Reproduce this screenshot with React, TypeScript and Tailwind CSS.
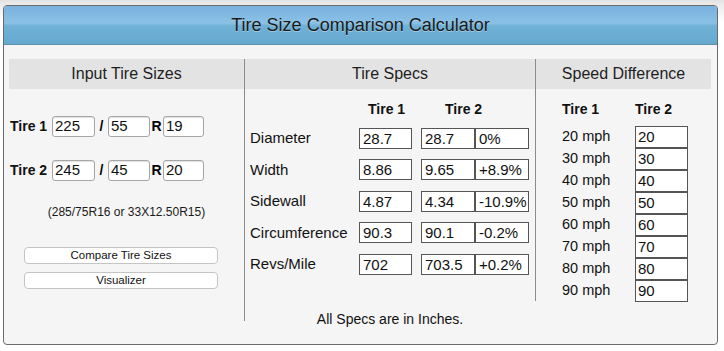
import React from 'react'

const specRows = [
  { label: 'Diameter', t1: '28.7', t2: '28.7', diff: '0%' },
  { label: 'Width', t1: '8.86', t2: '9.65', diff: '+8.9%' },
  { label: 'Sidewall', t1: '4.87', t2: '4.34', diff: '-10.9%' },
  { label: 'Circumference', t1: '90.3', t2: '90.1', diff: '-0.2%' },
  { label: 'Revs/Mile', t1: '702', t2: '703.5', diff: '+0.2%' },
]

const speeds = [20, 30, 40, 50, 60, 70, 80, 90]

function SizeInput({ value, width }: { value: string; width: string }) {
  return (
    <input
      readOnly
      value={value}
      className={`${width} block h-[21px] rounded-[3px] border border-[#a6a6a6] bg-white px-[2px] text-[15px] text-[#111] shadow-[inset_0_1px_1px_rgba(0,0,0,0.12)] focus:outline-none`}
    />
  )
}

function SpecBox({ value, width }: { value: string; width: string }) {
  return (
    <div className={`${width} h-[21px] border border-[#555] bg-white pl-[3px] text-[15px] leading-[19px] text-[#111]`}>
      {value}
    </div>
  )
}

function SectionBar({ title }: { title: string }) {
  return (
    <div className="h-[30px] bg-[#e3e3e3] text-center text-[16px] leading-[30px] text-[#1e1e1e]">
      {title}
    </div>
  )
}

function TireRow({ label, width, ratio, rim }: { label: string; width: string; ratio: string; rim: string }) {
  return (
    <div className="flex h-[21px] items-center pl-[1px]">
      <span className="w-[42px] text-[14px] font-bold text-[#111]">{label}</span>
      <SizeInput value={width} width="w-[43px]" />
      <span className="w-[13px] text-center text-[14px] font-bold">/</span>
      <SizeInput value={ratio} width="w-[42px]" />
      <span className="w-[13px] text-center text-[14px] font-bold">R</span>
      <SizeInput value={rim} width="w-[41px]" />
    </div>
  )
}

export default function App() {
  return (
    <div
      className="min-h-[351px] bg-[linear-gradient(to_bottom,#e2e2e2_0px,#ececec_5px,#ffffff_22px)] pl-[3px] pt-[5px]"
      style={{ fontFamily: '"Liberation Sans", Arial, Helvetica, sans-serif' }}
    >
      <div className="w-[715px] h-[340px] overflow-hidden rounded-[4px] border border-[#6b6b6b] bg-[#f5f5f5]">
        {/* Title bar */}
        <div className="h-[39px] border-b border-[#5d90ad] bg-[linear-gradient(to_bottom,#78b2df_0%,#8bc1e6_45%,#70b1d6_52%,#66a9cf_100%)] text-center text-[18px] leading-[38px] text-[#1a1a1a] [text-shadow:0_1px_0_rgba(255,255,255,0.35)]">
          Tire Size Comparison Calculator
        </div>

        <div className="flex pl-[5px] pt-[14px]">
          {/* Input column */}
          <div className="w-[236px] h-[262px] border-r border-[#8c8c8c]">
            <SectionBar title="Input Tire Sizes" />

            <div className="mt-[27px]">
              <TireRow label="Tire 1" width="225" ratio="55" rim="19" />
            </div>
            <div className="mt-[23px]">
              <TireRow label="Tire 2" width="245" ratio="45" rim="20" />
            </div>

            <p className="mt-[24px] text-center text-[12px] leading-[14px] text-[#1a1a1a]">
              (285/75R16 or 33X12.50R15)
            </p>

            <button className="ml-[15px] mt-[28px] block h-[17px] w-[194px] rounded-[4px] border border-[#c4c4c4] bg-white text-[11.5px] leading-[15px] text-[#111]">
              Compare Tire Sizes
            </button>
            <button className="ml-[15px] mt-[8px] block h-[17px] w-[194px] rounded-[4px] border border-[#c4c4c4] bg-white text-[11.5px] leading-[15px] text-[#111]">
              Visualizer
            </button>
          </div>

          <div className="flex flex-col">
            <div className="flex">
              {/* Tire specs column */}
              <div className="w-[291px] h-[242px] border-r border-[#8c8c8c]">
                <SectionBar title="Tire Specs" />
                <div className="mt-[12px] flex h-[16px] pl-[123px] text-[14px] font-bold leading-[16px] text-[#111]">
                  <span className="w-[77px]">Tire 1</span>
                  <span>Tire 2</span>
                </div>
                <div className="mt-[10px] flex flex-col gap-[9px]">
                  {specRows.map(r => (
                    <div key={r.label} className="flex items-center">
                      <span className="w-[114px] pl-[5px] text-[15px] text-[#111]">{r.label}</span>
                      <SpecBox value={r.t1} width="w-[53px]" />
                      <div className="ml-[9px] flex">
                        <SpecBox value={r.t2} width="w-[54px]" />
                        <SpecBox value={r.diff} width="w-[54px]" />
                      </div>
                    </div>
                  ))}
                </div>
              </div>

              {/* Speed column */}
              <div className="w-[175px]">
                <SectionBar title="Speed Difference" />
                <div className="mt-[12px] flex h-[16px] pl-[26px] text-[14px] font-bold leading-[16px] text-[#111]">
                  <span className="w-[73px]">Tire 1</span>
                  <span>Tire 2</span>
                </div>
                <div className="mt-[9px] flex flex-col">
                  {speeds.map(s => (
                    <div key={s} className="flex h-[22px] items-center">
                      <span className="w-[99px] pl-[26px] text-[14.5px] text-[#111]">{s} mph</span>
                      <div className="h-[22px] w-[53px] border border-[#555] bg-white pl-[2px] text-[15px] leading-[20px] text-[#111]">
                        {s}
                      </div>
                    </div>
                  ))}
                </div>
              </div>
            </div>

            <p className="mt-[9px] w-[290px] text-center text-[14px] leading-[16px] text-[#111]">
              All Specs are in Inches.
            </p>
          </div>
        </div>
      </div>
    </div>
  )
}
